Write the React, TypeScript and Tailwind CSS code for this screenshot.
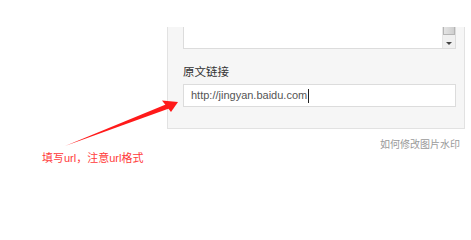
import React from "react";

const font = { fontFamily: '"Liberation Sans", "Noto Sans CJK SC", sans-serif' };

function Arrow() {
  return (
    <svg
      className="pointer-events-none absolute left-0 top-0"
      width="471"
      height="212"
      viewBox="0 0 471 212"
    >
      <path d="M65 146 L167 104 L169 108.5 Z" fill="#ff1a1a" />
      <polygon points="178,102 162,100.5 171,112" fill="#ff1a1a" />
    </svg>
  );
}

export default function App() {
  return (
    <div className="relative h-[212px] w-[471px] overflow-hidden bg-white" style={font}>
      <div className="ml-[167px] mt-[27px] flex h-[102px] w-[298px] flex-col border-x border-b border-[#e2e2e2] bg-[#f6f6f6] pl-[15px] pr-[8px]">
        {/* textarea tail */}
        <div className="flex h-[22px] border-x border-b border-[#dcdcdc] bg-white">
          <div className="flex-1" />
          <div className="flex w-[13px] flex-col border-l border-[#e6e6e6] bg-[#f0f0f0]">
            <div className="h-[8px] border-x border-b border-[#b5b5b5] bg-gradient-to-r from-[#e4e4e4] to-[#cfcfcf]" />
            <div className="flex flex-1 items-center justify-center pt-[3px]">
              <div className="h-0 w-0 border-x-[3px] border-t-[3px] border-x-transparent border-t-[#444]" />
            </div>
          </div>
        </div>
        <div className="mt-[16px] text-[11.5px] leading-[14px] text-[#333]">原文链接</div>
        <div className="mt-[5px] flex h-[23px] items-center border border-[#dcdcdc] bg-white pl-[7px] text-[11px] text-[#555]">
          <span>http://jingyan.baidu.com</span>
          <span className="ml-px h-[14px] w-px bg-[#222]" />
        </div>
      </div>
      <div className="mt-[8px] flex justify-end pr-[11px] text-[10px] text-[#9a9a9a]">
        如何修改图片水印
      </div>
      <div className="absolute left-[42px] top-[151px] text-[11px] leading-[14px] text-[#ff3a3a]">
        填写url，注意url格式
      </div>
      <Arrow />
    </div>
  );
}
